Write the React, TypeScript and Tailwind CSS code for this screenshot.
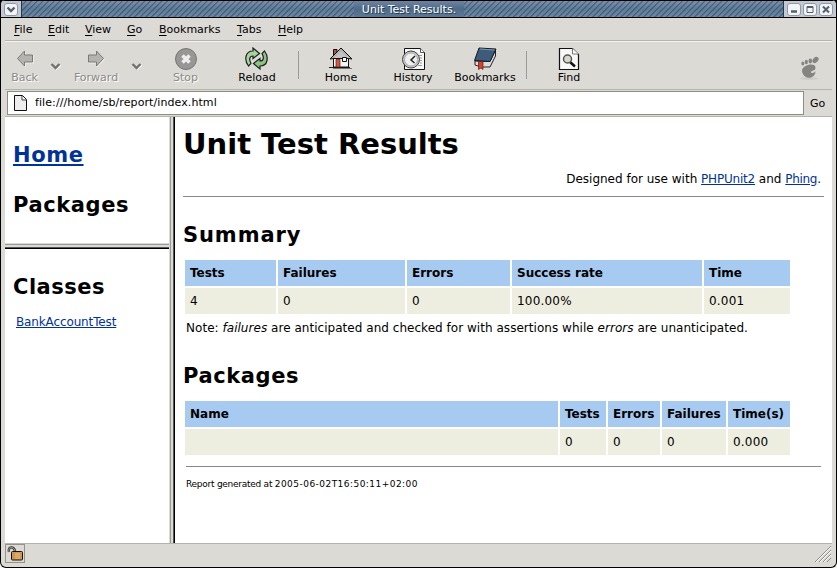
import React from "react";

const ui = "font-['DejaVu_Sans',sans-serif]";

function Menu({ label, className }: { label: string; className: string }) {
  return (
    <span className={`shrink-0 whitespace-nowrap ${className}`}>
      <span className="underline underline-offset-2">{label[0]}</span>
      {label.slice(1)}
    </span>
  );
}

function Tool({ label, className, disabled, children }: { label: string; className: string; disabled?: boolean; children: React.ReactNode }) {
  return (
    <div className={`flex shrink-0 flex-col items-center ${className}`}>
      <svg width="24" height="24" viewBox="0 0 24 24">{children}</svg>
      <span className={`whitespace-nowrap leading-[14px] ${disabled ? "text-[#8b8a87] [text-shadow:1px_1px_0_#fff]" : ""}`}>{label}</span>
    </div>
  );
}

function Chevron() {
  return (
    <svg className="mt-[15px] shrink-0" width="12" height="10" viewBox="0 0 12 10">
      <path d="M2 3l4 4 4.500-4" fill="none" stroke="#fff" strokeWidth="2" />
      <path d="M1.500 2l4 4 4-4" fill="none" stroke="#70706e" strokeWidth="2.400" />
    </svg>
  );
}

function WinButton({ children }: { children: React.ReactNode }) {
  return (
    <svg width="14" height="13" viewBox="0 0 14 13" className="shrink-0">
      <rect x=".5" y=".5" width="13" height="12" rx="2.500" fill="#f2f4f6" stroke="#8d99a6" />
      {children}
    </svg>
  );
}

function TitleBar() {
  return (
    <div className="flex h-[18px] border-y border-black bg-[#c3c9d3]">
      <div className="flex w-[20px] items-center justify-center">
        <WinButton><path d="M3.500 4.500l3.500 3.500 3.500-3.500" fill="none" stroke="#53616f" strokeWidth="2.400" /></WinButton>
      </div>
      <div className="flex flex-1 items-center justify-center border-x border-[#26384c] bg-[repeating-linear-gradient(135deg,transparent_0_2px,rgba(20,40,62,.4)_2.5px_3px,transparent_4px),linear-gradient(#7b90aa,#5f7d9b_50%,#6d88a3)] pl-[13px]">
        <span className="bg-[linear-gradient(#6d83a0,#4d6b88_50%,#5c7894)] px-2 pt-px text-[11px] leading-[15px] text-white [text-shadow:1px_1px_0_#26384c]">Unit Test Results.</span>
      </div>
      <div className="flex w-[52px] items-center justify-center gap-[2px]">
        <WinButton><path d="M4 8.500h6" stroke="#53616f" strokeWidth="2.500" /></WinButton>
        <WinButton><path d="M4 3.500h6v6H4zM4 4.500h6" fill="none" stroke="#53616f" /></WinButton>
        <WinButton><path d="M4 3.500l6 6M10 3.500l-6 6" stroke="#53616f" strokeWidth="2" /></WinButton>
      </div>
    </div>
  );
}

function ToolBar() {
  return (
    <div className="flex h-[48px] border-b border-[#b5b3ad] pt-[5px]">
      <Tool label="Back" className="w-[39px]" disabled>
        <path d="M4 11.500l8-8v4h8v8h-8v4z" fill="#eeedea" transform="translate(1 1)" />
        <path d="M4.500 11.500l7-7.500v4h8v7h-8v4z" fill="#b4b3b0" stroke="#7a7977" />
      </Tool>
      <div className="ml-[6px] flex"><Chevron /></div>
      <Tool label="Forward" className="ml-[8px] w-[52px]" disabled>
        <path d="M20 11.500l-8-8v4H4v8h8v4z" fill="#eeedea" transform="translate(1 1)" />
        <path d="M19.500 11.500l-7-7.500v4h-8v7h8v4z" fill="#b4b3b0" stroke="#7a7977" />
      </Tool>
      <div className="ml-[9px] flex"><Chevron /></div>
      <Tool label="Stop" className="ml-[12px] w-[61px]" disabled>
        <circle cx="12" cy="12" r="10.500" fill="#989795" stroke="#767573" />
        <path d="M8.500 8.500l7 7M15.500 8.500l-7 7" stroke="#eee" strokeWidth="3.500" />
      </Tool>
      <Tool label="Reload" className="ml-[10px] w-[62px]">
        <path d="M3.500 19C-1 13 0 4 8 4V1l6.500 5.500-6.500 5V9c-4 0-4 4-2 7.500z" fill="#a6d3a0" stroke="#1a241a" strokeWidth="1.200" />
        <path d="M3.500 19C-1 13 0 4 8 4V1l6.500 5.500-6.500 5V9c-4 0-4 4-2 7.500z" fill="#8fc28b" stroke="#1a241a" strokeWidth="1.200" transform="rotate(180 11.500 11.500)" />
      </Tool>
      <div className="ml-[10px] mt-[4px] h-[28px] w-px bg-[#9d9b96]" />
      <Tool label="Home" className="ml-[12px] w-[60px]">
        <path d="M0 20.500h21" stroke="#222" />
        <path d="M4 21.500h19" stroke="#77756f" />
        <path d="M4.500 10h15v10h-15z" fill="#f5f5f5" stroke="#111" />
        <path d="M4.500 9V2.500h3.500V6" fill="#b05045" stroke="#111" />
        <path d="M1 12L12 1l11 11-3.500-.5H5z" fill="#b2b2b2" stroke="#111" />
        <path d="M8 8h8M10 6h4M6 10h13" stroke="#e2e2e2" strokeWidth=".7" />
        <path d="M7 12.500h4V20H7z" fill="#d05a48" stroke="#5a1710" strokeWidth=".7" />
        <path d="M13.500 10.500h4v4h-4z" fill="#fff" stroke="#111" />
      </Tool>
      <Tool label="History" className="ml-[12px] w-[60px]">
        <path d="M3.500 1.500h16l4 4v17h-20z" fill="#f8f8f8" stroke="#111" />
        <path d="M19.500 1.500v4h4" fill="#fff" stroke="#555" />
        <path d="M18 8.500h3M19 11h2M19 13.500h2M19 16h2M17 18.500h4" stroke="#999" />
        <circle cx="10" cy="12.500" r="8.500" fill="#c9c9c9" stroke="#444" />
        <circle cx="10" cy="12.500" r="6.500" fill="#f0f0f0" stroke="#aaa" />
        <path d="M14 9l-4 4 3.500 3" fill="none" stroke="#222" strokeWidth="1.500" />
      </Tool>
      <Tool label="Bookmarks" className="ml-[5px] w-[74px]">
        <path d="M2 14L17 14.500 22.500 3v6L17 20H8l-6-2z" fill="#dcdcdc" stroke="#222" />
        <path d="M1.500 13.500L6 1l17 1-6 12.500z" fill="#3d5c7b" stroke="#101820" />
        <path d="M7 2l14.500 1" stroke="#7f9bb5" />
        <path d="M5.500 14.500h4.500v8l-2-1.500-2.500 1.500z" fill="#d0432d" stroke="#6c160d" strokeWidth=".7" />
      </Tool>
      <div className="ml-[4px] mt-[4px] h-[28px] w-px bg-[#9d9b96]" />
      <Tool label="Find" className="ml-[12px] w-[60px]">
        <path d="M2.500 1.500h13l6 6v15h-19z" fill="#f8f8f8" stroke="#111" strokeWidth="1.200" />
        <path d="M15.500 1.500v5.500h6" fill="#fff" stroke="#777" />
        <path d="M13 15l5 4.500" stroke="#111" strokeWidth="2.500" />
        <circle cx="10.500" cy="12" r="4" fill="#d5dac6" stroke="#555" strokeWidth="1.500" />
      </Tool>
      <div className="flex-1" />
      <svg className="mr-[10px] mt-[9px]" width="22" height="25" viewBox="0 0 22 25">
        <ellipse cx="9" cy="22.500" rx="9" ry="1.500" fill="#cdccc8" />
        <g fill="#858482">
          <ellipse cx="15.500" cy="4" rx="3.500" ry="2.500" transform="rotate(-45 15.500 4)" />
          <ellipse cx="10.300" cy="5" rx="1.800" ry="2.400" />
          <ellipse cx="6.300" cy="6" rx="1.600" ry="2.200" />
          <ellipse cx="2.800" cy="7.500" rx="1.500" ry="2" />
          <path d="M2 15c0-6.500 14-9 13.500-3 0 3-4.500 2.500-4.500 4s3 1.500 4.500-1c0 9-12.500 9-13.500 0z" />
        </g>
      </svg>
    </div>
  );
}

const th = "h-[26px] bg-[#a6caf0] px-[5px] text-left text-[12px] font-bold leading-[27px]";
const td = "h-[26px] bg-[#eeeee0] px-[5px] text-[12px] leading-[27px] tracking-[0.2px]";

function Grid({ cols, head, row }: { cols: string; head: string[]; row: string[] }) {
  return (
    <div className={`ml-[2px] grid w-[605px] gap-[2px] whitespace-nowrap ${cols}`}>
      {head.map((h) => <div key={h} className={th}>{h}</div>)}
      {row.map((r, i) => <div key={i} className={td}>{r}</div>)}
    </div>
  );
}

export default function App() {
  return (
    <div className={`h-[568px] w-[837px] overflow-hidden bg-[linear-gradient(#000_50%,#f4f4ec_50%)] ${ui} text-black`}>
      <div className="flex h-[568px] flex-col overflow-hidden rounded-t-[5px] rounded-b-[6px] border-x border-b border-black bg-[#dcdad5]">
        <TitleBar />
        <div className="mx-1 flex h-[23px] items-center border-b border-[#b5b3ad] pl-[9px] pt-[2px] text-[11px]">
          <Menu label="File" className="w-[34px]" />
          <Menu label="Edit" className="w-[37px]" />
          <Menu label="View" className="w-[42px]" />
          <Menu label="Go" className="w-[32px]" />
          <Menu label="Bookmarks" className="w-[78px]" />
          <Menu label="Tabs" className="w-[41px]" />
          <Menu label="Help" className="w-[40px]" />
        </div>
        <div className="mx-1 border-t border-[#f4f3f0] text-[11px]"><ToolBar /></div>
        <div className="mx-1 flex h-[27px] border-b border-[#b5b3ad] pl-[2px] pt-px text-[11px]">
          <div className="flex h-[24px] w-[797px] items-center border border-[#8f8c82] bg-white pl-[5px]">
            <svg width="15" height="16" viewBox="0 0 15 16"><path d="M1.500 .500h8l4 4v11h-12z" fill="#eee" stroke="#111" /><path d="M9 1v4h4" fill="#fff" stroke="#444" /></svg>
            <span className="ml-[7px] tracking-[0.09px]">file:///home/sb/report/index.html</span>
          </div>
          <span className="ml-[6px] leading-[25px]">Go</span>
        </div>
        <div className="mx-1 flex h-[426px] bg-white">
          <div className="flex w-[164px] flex-col">
            <div className="h-[126px] pl-[8px]">
              <div className="pt-[25px] text-[21px] font-bold leading-[26px] tracking-[0.6px] text-[#003399] underline">Home</div>
              <div className="mt-[24px] text-[21px] font-bold leading-[26px] tracking-[0.6px]">Packages</div>
            </div>
            <div className="h-[6px] border-b border-black bg-[#dcdad5] pt-px"><div className="h-[4px] border-y border-t-[#999] border-b-[#555]" /></div>
            <div className="pl-[8px]">
              <div className="pt-[25px] text-[21px] font-bold leading-[26px] tracking-[0.5px]">Classes</div>
              <div className="ml-[3px] mt-[14px] text-[12px] leading-[16px] tracking-[-0.13px] text-[#003399] underline">BankAccountTest</div>
            </div>
          </div>
          <div className="w-[6px] border-r border-black bg-[#dcdad5] pl-px"><div className="h-full border-x border-l-[#999] border-r-[#555]" /></div>
          <div className="flex-1 pl-[8px] pr-[8px]">
            <h1 className="pt-[9px] text-[29px] font-bold leading-[36px]">Unit Test Results</h1>
            <p className="mt-[9px] pr-[3px] text-right text-[12px] leading-[16px]">Designed for use with <span className="tracking-[-0.2px] text-[#003399] underline">PHPUnit2</span> and <span className="tracking-[-0.3px] text-[#003399] underline">Phing</span>.</p>
            <div className="mt-[9px] h-px bg-[#888]" />
            <h2 className="mt-[25px] text-[21px] font-bold leading-[26px] tracking-[0.9px]">Summary</h2>
            <div className="mt-[12px]"><Grid cols="grid-cols-[91px_127px_103px_190px_86px]" head={["Tests", "Failures", "Errors", "Success rate", "Time"]} row={["4", "0", "0", "100.00%", "0.001"]} /></div>
            <p className="ml-[3px] mt-[6px] text-[12px] leading-[16px] tracking-[0.035px]">Note: <i>failures</i> are anticipated and checked for with assertions while <i>errors</i> are unanticipated.</p>
            <h2 className="mt-[27px] text-[21px] font-bold leading-[26px] tracking-[0.6px]">Packages</h2>
            <div className="mt-[12px]"><Grid cols="grid-cols-[373px_46px_52px_64px_62px]" head={["Name", "Tests", "Errors", "Failures", "Time(s)"]} row={["", "0", "0", "0", "0.000"]} /></div>
            <div className="ml-[3px] mr-[3px] mt-[11px] h-px bg-[#888]" />
            <p className="ml-[3px] mt-[11px] text-[9px] leading-[12px]"><span className="tracking-[-0.26px]">Report generated at </span><span className="tracking-[0.46px]">2005-06-02T16:50:11+02:00</span></p>
          </div>
        </div>
        <div className="mx-1 flex flex-1 border-t border-[#b5b3ad]">
          <div className="flex h-[19px] w-[20px] items-center justify-center border border-[#969389]">
            <svg width="18" height="17" viewBox="0 0 18 17"><path d="M3 7c-1.500-6 5-6 6-1v2" fill="none" stroke="#333" strokeWidth="2.400" /><path d="M3 7c-1.500-6 5-6 6-1v2" fill="none" stroke="#bbb" strokeWidth=".8" /><rect x="5.500" y="6.500" width="11" height="8.500" rx="1" fill="#d09550" stroke="#111" /><path d="M9 9h5M9 11h5M9 13h5" stroke="#f0c890" strokeWidth=".8" /></svg>
          </div>
          <div className="flex-1" />
          <svg className="mt-[1px]" width="18" height="18" viewBox="0 0 18 18"><path d="M1 17L17 1M5 17L17 5M9 17L17 9M13 17l4-4" stroke="#8f8c86" /><path d="M2 17L17 2M6 17L17 6M10 17l7-7" stroke="#fff" /></svg>
        </div>
      </div>
    </div>
  );
}
